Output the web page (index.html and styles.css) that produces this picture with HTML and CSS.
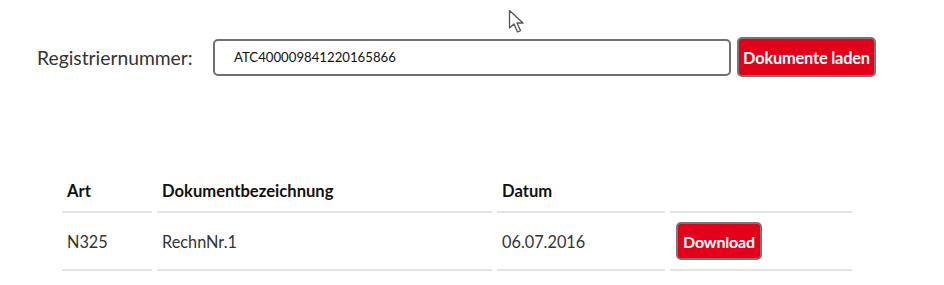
FILE: index.html
```html
<!DOCTYPE html>
<html lang="de">
<head>
<meta charset="utf-8">
<title>Dokumente</title>
<link rel="stylesheet" href="styles.css">
</head>
<body>
<div class="page">
  <form class="search">
    <label class="search-label" for="reg">Registriernummer:</label>
    <div class="search-input" id="reg">ATC400009841220165866</div>
    <button type="button" class="btn btn-load">Dokumente laden</button>
  </form>
  <table class="docs">
    <thead>
      <tr>
        <th class="col-art">Art</th>
        <th class="col-name">Dokumentbezeichnung</th>
        <th class="col-date">Datum</th>
        <th class="col-action"></th>
      </tr>
    </thead>
    <tbody>
      <tr>
        <td>N325</td>
        <td>RechnNr.1</td>
        <td>06.07.2016</td>
        <td><button type="button" class="btn btn-download">Download</button></td>
      </tr>
    </tbody>
  </table>
  <svg class="cursor" width="20" height="26" viewBox="0 0 20 26">
    <path d="M1.5 1.5 L1.5 19 L6 15 L9.5 23 L12.5 21.6 L9 14 L15 14 Z" fill="#fff" stroke="#555" stroke-width="1.3" stroke-linejoin="round"/>
  </svg>
</div>
</body>
</html>
```

FILE: styles.css
```css
* { box-sizing: border-box; }
html, body { margin: 0; padding: 0; background: #fff; }
body {
  font-family: Lato, "Open Sans", "Liberation Sans", sans-serif;
  color: #222;
  width: 944px;
  height: 285px;
  overflow: hidden;
}
.page {
  position: relative;
  padding: 37px 0 0 37px;
}
.search {
  display: flex;
  align-items: center;
  height: 40px;
  margin: 0;
}
.search-label {
  font-size: 19.3px;
  color: #333;
  width: 176px;
}
.search-input {
  width: 518px;
  height: 37px;
  border: 2px solid #707070;
  border-radius: 5px;
  padding: 0 0 0 19px;
  font-size: 13.2px;
  line-height: 33px;
  color: #111;
}
.btn {
  background: #e2001a;
  color: #fff;
  font-family: inherit;
  font-weight: 700;
  border: 2px solid #777;
  border-radius: 5px;
  cursor: pointer;
  padding: 0;
}
.btn-load {
  margin-left: 6px;
  width: 139px;
  height: 40px;
  font-size: 16.4px;
  letter-spacing: -0.2px;
}
.docs {
  margin: 98px 0 0 20px;
  border-collapse: separate;
  border-spacing: 5px 0;
  width: 800px;
  font-size: 16.3px;
}
.docs th {
  text-align: left;
  font-weight: 700;
  color: #111;
  height: 38px;
  padding: 0 0 4px 5px;
  border-bottom: 2px solid #e3e3e3;
  vertical-align: middle;
  font-size: 16.6px;
}
.docs td {
  height: 58px;
  padding: 0 0 0 5px;
  border-bottom: 2px solid #e3e3e3;
  vertical-align: middle;
  color: #333;
}
.col-art { width: 90px; }
.col-name { width: 335px; }
.col-date { width: 168px; }
.col-action { width: 182px; }
.btn-download {
  width: 86px;
  height: 38px;
  font-size: 16px;
  letter-spacing: -0.2px;
  margin-left: 1px;
}
.cursor {
  position: absolute;
  left: 508px;
  top: 9px;
}
```
